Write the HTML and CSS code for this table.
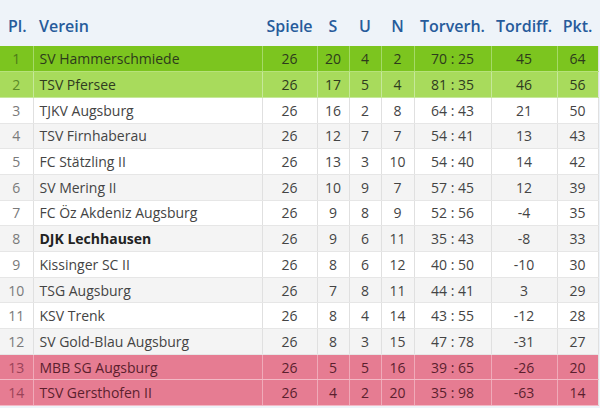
FILE: index.html
```html
<!DOCTYPE html>
<html>
<head>
<meta charset="utf-8">
<link rel="stylesheet" href="styles.css">
</head>
<body>
<div class="wrap">
<table class="tab">
<colgroup>
<col class="c-pl"><col class="c-ver"><col class="c-sp"><col class="c-s"><col class="c-u"><col class="c-n"><col class="c-tv"><col class="c-td"><col class="c-pk">
</colgroup>
<thead>
<tr><th class="l pl">Pl.</th><th class="l">Verein</th><th>Spiele</th><th>S</th><th>U</th><th>N</th><th>Torverh.</th><th>Tordiff.</th><th>Pkt.</th></tr>
</thead>
<tbody>
<tr class="up1"><td class="pl">1</td><td class="l">SV Hammerschmiede</td><td>26</td><td>20</td><td>4</td><td>2</td><td>70 : 25</td><td>45</td><td>64</td></tr>
<tr class="up2"><td class="pl">2</td><td class="l">TSV Pfersee</td><td>26</td><td>17</td><td>5</td><td>4</td><td>81 : 35</td><td>46</td><td>56</td></tr>
<tr><td class="pl">3</td><td class="l">TJKV Augsburg</td><td>26</td><td>16</td><td>2</td><td>8</td><td>64 : 43</td><td>21</td><td>50</td></tr>
<tr class="alt"><td class="pl">4</td><td class="l">TSV Firnhaberau</td><td>26</td><td>12</td><td>7</td><td>7</td><td>54 : 41</td><td>13</td><td>43</td></tr>
<tr><td class="pl">5</td><td class="l">FC Stätzling II</td><td>26</td><td>13</td><td>3</td><td>10</td><td>54 : 40</td><td>14</td><td>42</td></tr>
<tr class="alt"><td class="pl">6</td><td class="l">SV Mering II</td><td>26</td><td>10</td><td>9</td><td>7</td><td>57 : 45</td><td>12</td><td>39</td></tr>
<tr><td class="pl">7</td><td class="l">FC Öz Akdeniz Augsburg</td><td>26</td><td>9</td><td>8</td><td>9</td><td>52 : 56</td><td>-4</td><td>35</td></tr>
<tr class="alt"><td class="pl">8</td><td class="l own">DJK Lechhausen</td><td>26</td><td>9</td><td>6</td><td>11</td><td>35 : 43</td><td>-8</td><td>33</td></tr>
<tr><td class="pl">9</td><td class="l">Kissinger SC II</td><td>26</td><td>8</td><td>6</td><td>12</td><td>40 : 50</td><td>-10</td><td>30</td></tr>
<tr class="alt"><td class="pl">10</td><td class="l">TSG Augsburg</td><td>26</td><td>7</td><td>8</td><td>11</td><td>44 : 41</td><td>3</td><td>29</td></tr>
<tr><td class="pl">11</td><td class="l">KSV Trenk</td><td>26</td><td>8</td><td>4</td><td>14</td><td>43 : 55</td><td>-12</td><td>28</td></tr>
<tr class="alt"><td class="pl">12</td><td class="l">SV Gold-Blau Augsburg</td><td>26</td><td>8</td><td>3</td><td>15</td><td>47 : 78</td><td>-31</td><td>27</td></tr>
<tr class="down"><td class="pl">13</td><td class="l">MBB SG Augsburg</td><td>26</td><td>5</td><td>5</td><td>16</td><td>39 : 65</td><td>-26</td><td>20</td></tr>
<tr class="down"><td class="pl">14</td><td class="l">TSV Gersthofen II</td><td>26</td><td>4</td><td>2</td><td>20</td><td>35 : 98</td><td>-63</td><td>14</td></tr>
</tbody>
</table>
</div>
</body>
</html>
```

FILE: styles.css
```css
html, body {
  margin: 0;
  padding: 0;
  background: #eef3f9;
}
.wrap {
  width: 598px;
  background: #ffffff;
}
.tab {
  width: 598px;
  border-collapse: collapse;
  table-layout: fixed;
  font-family: "Open Sans", "DejaVu Sans", sans-serif;
  font-size: 14px;
  color: #444444;
}
.c-pl { width: 33px; }
.c-ver { width: 229px; }
.c-sp { width: 55px; }
.c-s { width: 32px; }
.c-u { width: 32px; }
.c-n { width: 33px; }
.c-tv { width: 77px; }
.c-td { width: 66px; }
.c-pk { width: 41px; }

thead tr {
  height: 46px;
  background: #eef3f9;
}
th {
  font-size: 16px;
  font-weight: 600;
  color: #275b9b;
  text-align: center;
  padding: 6px 0 0 0;
  white-space: nowrap;
}
th.l { text-align: left; padding-left: 6px; }
th.pl { padding-left: 8px; }

tbody tr {
  height: 25.7px;
  background: #ffffff;
}
tbody tr.alt { background: #f4f4f4; }
td {
  text-align: center;
  padding: 0;
  border-left: 1px solid #e0e0e0;
  border-bottom: 1px solid #e6e6e6;
  white-space: nowrap;
}
td:first-child { border-left: none; }
td:last-child { border-right: 1px solid #e0e0e0; }
td.l { text-align: left; padding-left: 6px; }
td.pl { color: #7a7a7a; }
td.own { font-weight: 700; color: #222222; }

tr.up1 { background: #7cc51f; }
tr.up1 td { border-left-color: #a5d968; border-bottom-color: #b7e27a; color: #2d3a1c; }
tr.up1 td.pl { color: #4d7a18; }
tr.up2 { background: #a8db5c; }
tr.up2 td { border-left-color: #c6e89a; border-bottom-color: #c6e89a; color: #2f3b1f; }
tr.up2 td.pl { color: #5a8a28; }
tr.down { background: #e67c92; }
tr.down td { border-left-color: #f0aab9; border-bottom-color: #f3b9c5; color: #5b1f2e; }
tr.down td.pl { color: #9a4258; }
```
